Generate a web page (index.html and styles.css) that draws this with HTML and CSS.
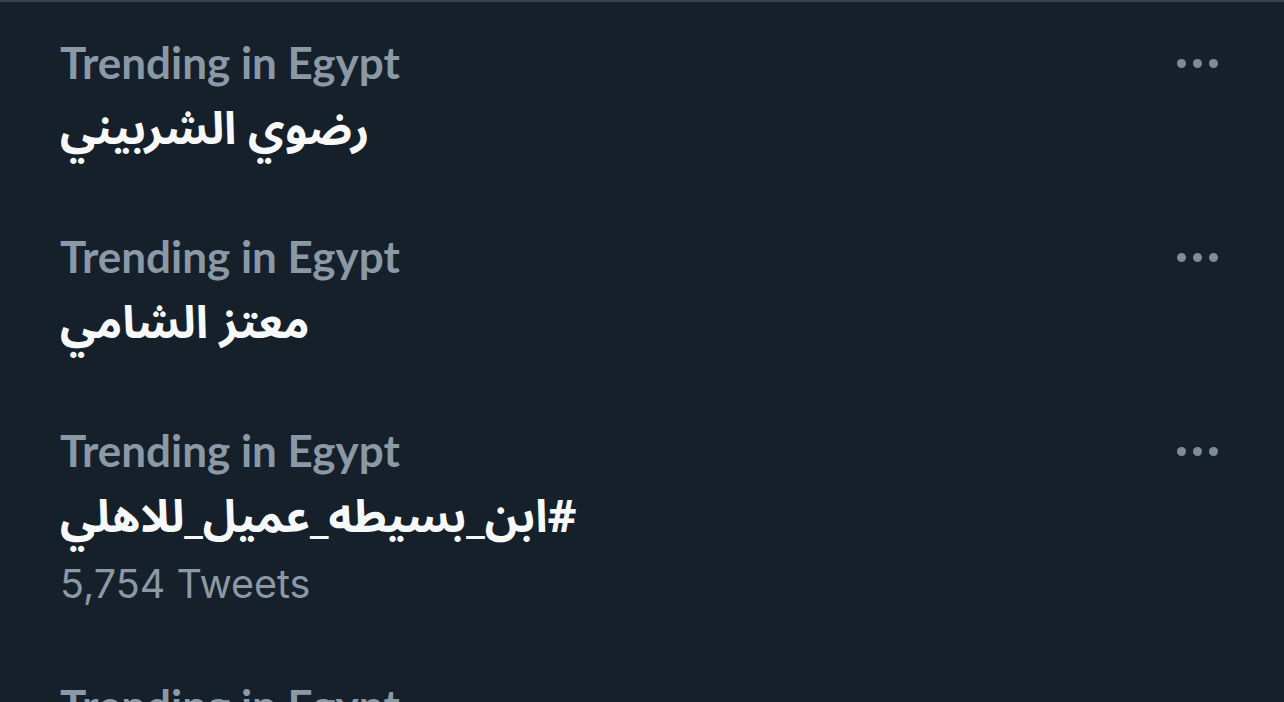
FILE: index.html
```html
<!DOCTYPE html>
<html lang="en">

<head>
    <meta charset="UTF-8">
    <title>Trends</title>
    <link rel="stylesheet" href="styles.css">
</head>

<body>
    <div class="trends">
        <div class="trend">
            <div class="trend-text">
                <div class="trend-label">Trending in Egypt</div>
                <div class="trend-name" dir="rtl">رضوي الشربيني</div>
            </div>
            <div class="more"><span></span><span></span><span></span></div>
        </div>
        <div class="trend">
            <div class="trend-text">
                <div class="trend-label">Trending in Egypt</div>
                <div class="trend-name" dir="rtl">معتز الشامي</div>
            </div>
            <div class="more"><span></span><span></span><span></span></div>
        </div>
        <div class="trend">
            <div class="trend-text">
                <div class="trend-label">Trending in Egypt</div>
                <div class="trend-name" dir="rtl">#ابن_بسيطه_عميل_للاهلي</div>
                <div class="trend-count">5,754 Tweets</div>
            </div>
            <div class="more"><span></span><span></span><span></span></div>
        </div>
        <div class="trend">
            <div class="trend-text">
                <div class="trend-label">Trending in Egypt</div>
                <div class="trend-name" dir="rtl">الاهلي</div>
            </div>
            <div class="more"><span></span><span></span><span></span></div>
        </div>
    </div>
</body>

</html>
```

FILE: styles.css
```css
body {
    margin: 0;
    background-color: #15202b;
    font-family: Lato, "Noto Sans", sans-serif;
    overflow: hidden;
}

.trends {
    border-top: 2px solid #38444d;
}

.trend {
    display: flex;
    justify-content: space-between;
    align-items: flex-start;
    padding: 30px 60px 30px 60px;
}

.trend-text {
    display: flex;
    flex-direction: column;
    align-items: flex-start;
}

.trend-label {
    color: #8b98a5;
    font-size: 44px;
    font-weight: bold;
    line-height: 61px;
}

.trend-name {
    color: #f7f9f9;
    font-family: "Noto Sans Arabic", "DejaVu Sans", sans-serif;
    font-size: 45px;
    font-weight: bold;
    line-height: 73px;
}

.trend-count {
    color: #8b98a5;
    font-family: Inter, sans-serif;
    font-size: 39.5px;
    line-height: 61px;
}

.more {
    display: flex;
    gap: 7px;
    padding-top: 27px;
    margin-right: 6px;
}

.more span {
    width: 9px;
    height: 9px;
    border-radius: 50%;
    background-color: #7d8a98;
}
```
